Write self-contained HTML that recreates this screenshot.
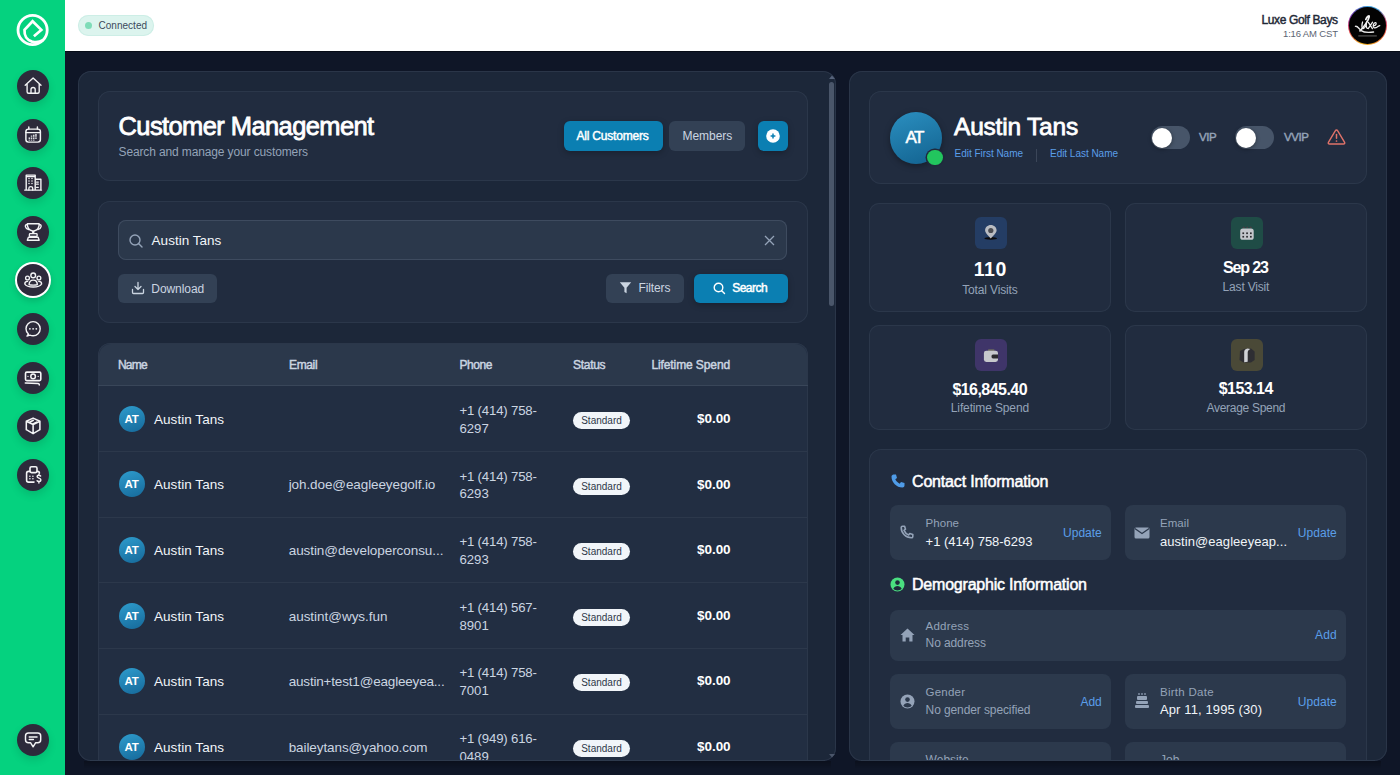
<!DOCTYPE html>
<html><head><meta charset="utf-8"><style>
*{margin:0;padding:0;box-sizing:border-box}
html,body{width:1400px;height:775px;overflow:hidden;background:#0f1627;font-family:"Liberation Sans",sans-serif;}
.b{position:absolute}
.t{position:absolute;line-height:1;white-space:nowrap}
.c{text-align:center}
.av{border-radius:50%;background:linear-gradient(160deg,#2e9ccd,#16699a);color:#fff;font-size:11.5px;font-weight:700;line-height:26px;text-align:center;letter-spacing:-0.3px}
.badge{width:57px;height:17px;border-radius:9px;background:#f1f5f9;color:#2d3748;font-size:10px;line-height:17px;text-align:center}
</style></head><body>
<domain style="display:none">Computer-Use</domain>

<div class="b" style="left:65px;top:0px;width:1335px;height:51px;background:#ffffff;border-radius:0px;"></div>
<div class="b" style="left:65px;top:51px;width:1335px;height:1px;background:#060b16;border-radius:0px;"></div>
<div class="b" style="left:78px;top:15px;width:76px;height:21px;border-radius:11px;background:#dcf4ee;box-shadow:inset 0 0 0 1px #cdeee6"></div>
<div class="b" style="left:85px;top:22px;width:7px;height:7px;border-radius:50%;background:#7fdcb8"></div>
<div class="b" style="left:1348px;top:6.3px;width:39px;height:39px;border-radius:50%;background:conic-gradient(from 0deg,#3a9ad8,#3a9ad8 30deg,#e04a70 80deg,#e05a3a 120deg,#f0a020 170deg,#f0b020 200deg,#e04060 260deg,#7a3ab0 300deg,#3a9ad8);"></div>
<div class="b" style="left:1349.1px;top:7.4px;width:36.8px;height:36.8px;border-radius:50%;background:#030303;"></div>
<svg class="b" style="left:1345px;top:4px" width="45" height="44" viewBox="0 0 45 44">
<path d="M20.8 15.5 C21.8 12.5 24.6 10.6 24.2 12.8 C23.6 16 19.5 22.5 15 26.8" stroke="#f2f2f2" stroke-width="1.7" fill="none" stroke-linecap="round"/>
<path d="M10.4 22.3 C12.5 21.6 14 25 16.2 26.6 C19 28.6 24 28.6 28.6 28" stroke="#e8e8e8" stroke-width="1.3" fill="none" stroke-linecap="round"/>
<path d="M17.6 18 C16.8 20.5 16.4 24.5 18.3 24.5 C19.8 24.5 21 21.5 21.6 18 C21.1 20.5 21 24.5 22.6 24.3 M23.4 18.4 L27.4 24.6 M27.6 18.2 L23.2 24.6 M28.3 21.8 C30 21.8 31.6 20.5 31.1 19.1 C30.6 18.1 28.4 18.8 28.2 21.6 C28 23.8 29.8 24.8 32.2 23 C33.2 22.2 34 21.8 34.8 21.6" stroke="#f2f2f2" stroke-width="1.25" fill="none" stroke-linecap="round" stroke-linejoin="round"/>
<rect x="13.3" y="31.2" width="18.5" height="1.4" fill="#4a4a4a"/>
</svg>
<div class="b" style="left:0px;top:0px;width:65px;height:775px;background:#05d27f;border-radius:0px;"></div>
<svg class="b" style="left:15px;top:13px" width="35" height="35" viewBox="0 0 35 35">
<circle cx="17.6" cy="17" r="14.6" stroke="#fff" stroke-width="2.8" fill="none"/>
<path d="M18.9 23.3 L26.3 16.9 L17.6 8.3 L9.5 16.9 C9.2 22.5 12 27 17 28.6 C20.5 29.6 24.5 29.2 27.9 27.3" stroke="#fff" stroke-width="2.7" fill="none" stroke-linejoin="miter" stroke-miterlimit="6"/>
</svg>
<div class="b" style="left:16.5px;top:70px;width:32px;height:32px;border-radius:50%;background:#2d2a3b;box-shadow:0 4px 8px rgba(0,0,0,.12)"></div>
<svg class="b" style="left:22.5px;top:76px" width="20" height="20" viewBox="0 0 20 20"><path d="M2.2 9.3 L10.1 1.9 L18 9.3 M4.1 7.6 V15.7 C4.1 16.6 4.7 17.2 5.6 17.2 H14.7 C15.6 17.2 16.2 16.6 16.2 15.7 V7.6 M8 17.2 V13.5 C8 12.3 9 11.5 10.1 11.5 C11.2 11.5 12.2 12.3 12.2 13.5 V17.2" stroke="#f4f4f6" fill="none" stroke-linecap="round" stroke-linejoin="round" stroke-width="1.35"/></svg>
<div class="b" style="left:16.5px;top:118.6px;width:32px;height:32px;border-radius:50%;background:#2d2a3b;box-shadow:0 4px 8px rgba(0,0,0,.12)"></div>
<svg class="b" style="left:22.5px;top:124.6px" width="20" height="20" viewBox="0 0 20 20"><rect x="2.9" y="4.1" width="14.5" height="13" rx="2.5" stroke="#f4f4f6" fill="none" stroke-linecap="round" stroke-linejoin="round" stroke-width="1.45"/><path d="M2.9 7.6 H17.4 M5.8 1.9 V4.1 M14.4 1.9 V4.1" stroke="#f4f4f6" fill="none" stroke-linecap="round" stroke-linejoin="round" stroke-width="1.45"/><g fill="#d9d9de"><rect x="5.6" y="12.4" width="1.5" height="1.6"/><rect x="7.8" y="12.4" width="1.5" height="1.6"/><rect x="10" y="12.4" width="1.5" height="1.6"/><rect x="12.2" y="12.4" width="1.5" height="1.6"/><rect x="7.8" y="10.5" width="1.5" height="1.3"/><rect x="10" y="9.7" width="1.5" height="2.1"/><rect x="12.2" y="9" width="1.5" height="2.8"/><rect x="5.6" y="14.6" width="1.5" height="1"/><rect x="7.8" y="14.6" width="1.5" height="1"/><rect x="10" y="14.6" width="1.5" height="1"/></g></svg>
<div class="b" style="left:16.5px;top:167.2px;width:32px;height:32px;border-radius:50%;background:#2d2a3b;box-shadow:0 4px 8px rgba(0,0,0,.12)"></div>
<svg class="b" style="left:22.5px;top:173.2px" width="20" height="20" viewBox="0 0 20 20"><path d="M1.7 17.1 H18.5 M3.2 17.1 V2.1 H12.2 V17.1 M3.2 3.6 H12.2 M12.2 6.3 H17.9 V17.1" stroke="#f4f4f6" fill="none" stroke-linecap="round" stroke-linejoin="round" stroke-width="1.4"/><g fill="#f4f4f6"><circle cx="6" cy="5.4" r="0.75"/><circle cx="9" cy="5.4" r="0.75"/><circle cx="6" cy="8" r="0.75"/><circle cx="9" cy="8" r="0.75"/><circle cx="6" cy="10.6" r="0.75"/><circle cx="9" cy="10.6" r="0.75"/></g><path d="M5.9 17.1 V15.1 C5.9 14.1 6.8 13.6 7.8 13.6 C8.8 13.6 9.7 14.1 9.7 15.1 V17.1 M13.6 9.1 H15.3 M13.6 11.2 H15.3 M13.6 14.3 H15.3" stroke="#f4f4f6" fill="none" stroke-linecap="round" stroke-linejoin="round" stroke-width="1.3"/></svg>
<div class="b" style="left:16.5px;top:215.7px;width:32px;height:32px;border-radius:50%;background:#2d2a3b;box-shadow:0 4px 8px rgba(0,0,0,.12)"></div>
<svg class="b" style="left:22.5px;top:221.7px" width="20" height="20" viewBox="0 0 20 20"><path d="M4.3 1.7 H16.2 C16.2 5.8 13.8 8.3 10.9 9 H9.6 C6.7 8.3 4.3 5.8 4.3 1.7 Z M4.5 2.5 C2.7 2.5 2.2 3.3 2.4 4.6 C2.7 6.1 3.7 7.1 5.6 7.6 M16 2.5 C17.8 2.5 18.3 3.3 18.1 4.6 C17.8 6.1 16.8 7.1 14.9 7.6 M9.6 9 L9.9 11.3 M10.9 9 L10.6 11.3" stroke="#f4f4f6" fill="none" stroke-linecap="round" stroke-linejoin="round" stroke-width="1.35"/><rect x="6.4" y="11.6" width="7.7" height="2.9" rx="0.8" stroke="#f4f4f6" fill="none" stroke-linecap="round" stroke-linejoin="round" stroke-width="1.35"/><path d="M4.3 18.2 L5.4 15.2 H15.1 L16.2 18.2 Z" stroke="#f4f4f6" fill="none" stroke-linecap="round" stroke-linejoin="round" stroke-width="1.35"/></svg>
<div class="b" style="left:14.5px;top:262.3px;width:36px;height:36px;border-radius:50%;background:#fff;box-shadow:0 3px 6px rgba(0,0,0,.15)"></div>
<div class="b" style="left:16.5px;top:264.3px;width:32px;height:32px;border-radius:50%;background:#2d2a3b"></div>
<svg class="b" style="left:22.5px;top:270.3px" width="20" height="20" viewBox="0 0 20 20"><circle cx="10.2" cy="5.4" r="2.35" stroke="#f4f4f6" fill="none" stroke-linecap="round" stroke-linejoin="round" stroke-width="1.4"/><circle cx="4.5" cy="8" r="1.9" stroke="#f4f4f6" fill="none" stroke-linecap="round" stroke-linejoin="round" stroke-width="1.35"/><circle cx="15.9" cy="8" r="1.9" stroke="#f4f4f6" fill="none" stroke-linecap="round" stroke-linejoin="round" stroke-width="1.35"/><path d="M6.1 14.6 C6.1 11.7 7.9 10.1 10.2 10.1 C12.5 10.1 14.3 11.7 14.3 14.6 C12.8 15.3 7.6 15.3 6.1 14.6 Z M1.8 14 C1.8 12.4 2.8 11.4 4.6 11.4 M18.6 14 C18.6 12.4 17.6 11.4 15.8 11.4 M1.8 14 C3 16 6.5 17 10.2 17 C13.9 17 17.4 16 18.6 14" stroke="#f4f4f6" fill="none" stroke-linecap="round" stroke-linejoin="round" stroke-width="1.4"/></svg>
<div class="b" style="left:16.5px;top:312.9px;width:32px;height:32px;border-radius:50%;background:#2d2a3b;box-shadow:0 4px 8px rgba(0,0,0,.12)"></div>
<svg class="b" style="left:22.5px;top:318.9px" width="20" height="20" viewBox="0 0 20 20"><path d="M5.4 15 C3.9 13.7 3 11.8 3 9.7 C3 5.8 6.2 2.6 10.1 2.6 C14 2.6 17.2 5.8 17.2 9.7 C17.2 13.6 14 16.8 10.1 16.8 C8.9 16.8 7.9 16.6 6.9 16.2 L4 17.1 Z" stroke="#f4f4f6" fill="none" stroke-linecap="round" stroke-linejoin="round" stroke-width="1.4"/><g fill="#f4f4f6"><circle cx="6.9" cy="9.8" r="0.9"/><circle cx="10.1" cy="9.8" r="0.9"/><circle cx="13.3" cy="9.8" r="0.9"/></g></svg>
<div class="b" style="left:16.5px;top:361.5px;width:32px;height:32px;border-radius:50%;background:#2d2a3b;box-shadow:0 4px 8px rgba(0,0,0,.12)"></div>
<svg class="b" style="left:22.5px;top:367.5px" width="20" height="20" viewBox="0 0 20 20"><rect x="2.5" y="4.1" width="15.3" height="8.5" rx="1.3" stroke="#f4f4f6" fill="none" stroke-linecap="round" stroke-linejoin="round" stroke-width="1.6"/><circle cx="10.1" cy="8.4" r="2.3" stroke="#f4f4f6" fill="none" stroke-linecap="round" stroke-linejoin="round" stroke-width="1.5"/><g fill="#e6e6ea"><circle cx="5" cy="8.4" r="0.65"/><circle cx="15.2" cy="8.4" r="0.65"/></g><path d="M2.3 15 C6 15 12 15.2 15 15.5 C16 15.6 16.5 16 16.2 16.9" stroke="#f4f4f6" fill="none" stroke-linecap="round" stroke-linejoin="round" stroke-width="1.5"/></svg>
<div class="b" style="left:16.5px;top:410.1px;width:32px;height:32px;border-radius:50%;background:#2d2a3b;box-shadow:0 4px 8px rgba(0,0,0,.12)"></div>
<svg class="b" style="left:22.5px;top:416.1px" width="20" height="20" viewBox="0 0 20 20"><path d="M10.1 2.1 L16.9 5.3 V13.7 L10.1 17.6 L3.3 13.7 V5.3 Z M3.3 5.3 L10.1 8.5 L16.9 5.3 M10.1 8.5 V17.6 M6.2 6.5 L10.3 4.3 M9.9 8 L13.7 6.1" stroke="#f4f4f6" fill="none" stroke-linecap="round" stroke-linejoin="round" stroke-width="1.55"/></svg>
<div class="b" style="left:16.5px;top:458.7px;width:32px;height:32px;border-radius:50%;background:#2d2a3b;box-shadow:0 4px 8px rgba(0,0,0,.12)"></div>
<svg class="b" style="left:22.5px;top:464.7px" width="20" height="20" viewBox="0 0 20 20"><rect x="7" y="1.7" width="7" height="5.9" rx="1.5" stroke="#f4f4f6" fill="none" stroke-linecap="round" stroke-linejoin="round" stroke-width="1.6"/><path d="M7 6.4 H5.6 C4.4 6.4 3.6 7.2 3.6 8.4 V15.2 C3.6 16.4 4.4 17.1 5.6 17.1 H11 M14 6.4 H14.6 C15.6 6.4 16.4 7.1 16.4 8.2" stroke="#f4f4f6" fill="none" stroke-linecap="round" stroke-linejoin="round" stroke-width="1.6"/><g fill="#f4f4f6"><circle cx="6.9" cy="11.3" r="0.8"/><circle cx="9.9" cy="11.3" r="0.8"/><circle cx="6.9" cy="13.8" r="0.8"/><circle cx="9.9" cy="13.8" r="0.8"/></g><path d="M17.6 10.9 C17.1 10.4 16.5 10.2 15.7 10.2 C14.7 10.2 14.1 10.8 14.1 11.6 C14.1 13.4 17.9 12.9 17.9 15 C17.9 15.9 17.1 16.5 16 16.5 C15.1 16.5 14.5 16.2 14.1 15.8 M15.9 9.3 V10.2 M15.9 16.5 V17.9" stroke="#f4f4f6" fill="none" stroke-linecap="round" stroke-linejoin="round" stroke-width="1.45"/></svg>
<div class="b" style="left:16.5px;top:724px;width:32px;height:32px;border-radius:50%;background:#2d2a3b;box-shadow:0 4px 8px rgba(0,0,0,.12)"></div>
<svg class="b" style="left:22.5px;top:730px" width="20" height="20" viewBox="0 0 20 20"><path d="M5.5 3 H14.7 C16.4 3 17.7 4.3 17.7 6 V9.7 C17.7 11.4 16.4 12.7 14.7 12.7 H12.7 L10.1 16.8 L7.5 12.7 H5.5 C3.8 12.7 2.5 11.4 2.5 9.7 V6 C2.5 4.3 3.8 3 5.5 3 Z" stroke="#f4f4f6" fill="none" stroke-linecap="round" stroke-linejoin="round" stroke-width="1.45"/><path d="M6.3 7 H14 M6.3 9.6 H10.4" stroke="#f4f4f6" fill="none" stroke-linecap="round" stroke-linejoin="round" stroke-width="1.5"/></svg>
<div class="b" style="left:78px;top:71px;width:758px;height:690px;border-radius:13px;background:#1c2739;box-shadow:inset 0 0 0 1px #2a3548;overflow:hidden"></div>
<div class="b" style="left:829px;top:82px;width:5px;height:224px;border-radius:3px;background:#4a566a"></div>
<svg class="b" style="left:828.5px;top:75px" width="6" height="4"><path d="M0 4 L3 0.5 L6 4Z" fill="#56627a"/></svg>
<svg class="b" style="left:828.5px;top:754px" width="6" height="4"><path d="M0 0 L3 3.5 L6 0Z" fill="#4b566a"/></svg>
<div class="b" style="left:98px;top:91px;width:710px;height:90px;border-radius:12px;background:#212c3f;box-shadow:inset 0 0 0 1px #2b374a"></div>
<div class="b" style="left:564px;top:121px;width:99px;height:30px;border-radius:6px;background:#0b7fb2;box-shadow:0 2px 6px rgba(0,0,0,.25)"></div>
<div class="b" style="left:669px;top:121px;width:76px;height:30px;border-radius:6px;background:#334155"></div>
<div class="b" style="left:758px;top:121px;width:30px;height:30px;border-radius:6px;background:#0b7fb2;box-shadow:0 2px 6px rgba(0,0,0,.25)"></div>
<svg class="b" style="left:766px;top:129px" width="14" height="14" viewBox="0 0 14 14"><circle cx="7" cy="7" r="6.8" fill="#fff"/><path d="M7 4.6 V9.4 M4.6 7 H9.4" stroke="#0b7fb2" stroke-width="1.5"/></svg>
<div class="b" style="left:98px;top:201px;width:710px;height:122px;border-radius:12px;background:#212c3f;box-shadow:inset 0 0 0 1px #2b374a"></div>
<div class="b" style="left:118px;top:220px;width:669px;height:40px;border-radius:8px;background:#2b384b;box-shadow:inset 0 0 0 1px #3e4b5f"></div>
<svg class="b" style="left:128px;top:233px" width="16" height="16" viewBox="0 0 16 16"><circle cx="7" cy="7" r="5" stroke="#94a3b8" stroke-width="1.4" fill="none"/><path d="M10.8 10.8 L14 14" stroke="#94a3b8" stroke-width="1.4" stroke-linecap="round"/></svg>
<svg class="b" style="left:764px;top:235px" width="11" height="11" viewBox="0 0 11 11"><path d="M1 1 L10 10 M10 1 L1 10" stroke="#94a3b8" stroke-width="1.3"/></svg>
<div class="b" style="left:118px;top:274px;width:99px;height:29px;border-radius:6px;background:#334155"></div>
<svg class="b" style="left:131px;top:281px" width="14" height="14" viewBox="0 0 14 14"><path d="M7 1.5 V8.5 M4 5.5 L7 8.5 L10 5.5 M1.5 8.5 V11.5 C1.5 12 2 12.5 2.5 12.5 H11.5 C12 12.5 12.5 12 12.5 11.5 V8.5" stroke="#cbd5e1" stroke-width="1.3" fill="none" stroke-linecap="round" stroke-linejoin="round"/></svg>
<div class="b" style="left:606px;top:274px;width:78px;height:29px;border-radius:6px;background:#334155"></div>
<svg class="b" style="left:619px;top:281px" width="13" height="13" viewBox="0 0 13 13"><path d="M0.8 1.3 H12.2 L7.6 6.8 V12.3 L5.4 11 V6.8 Z" fill="#cbd5e1"/></svg>
<div class="b" style="left:694px;top:274px;width:94px;height:29px;border-radius:6px;background:#0b7fb2;box-shadow:0 2px 6px rgba(0,0,0,.25)"></div>
<svg class="b" style="left:712px;top:281px" width="14" height="14" viewBox="0 0 14 14"><circle cx="6.5" cy="6.5" r="4.3" stroke="#fff" stroke-width="1.4" fill="none"/><path d="M9.7 9.7 L12.5 12.5" stroke="#fff" stroke-width="1.4" stroke-linecap="round"/></svg>
<div class="b" style="left:98px;top:343px;width:710px;height:418px;overflow:hidden;">
<div style="position:absolute;left:0;top:0;width:710px;height:500px;border-radius:12px;background:#222e42;box-shadow:inset 0 0 0 1px #2b374a;"></div>
<div style="position:absolute;left:1px;top:1px;width:708px;height:42px;border-radius:12px 12px 0 0;background:#2b384b;"></div>
<div style="position:absolute;left:0;top:42px;width:710px;height:1px;background:#394659;"></div>
</div>
<div class="b av" style="left:118.5px;top:405.8px;width:26px;height:26px;">AT</div>
<div class="b badge" style="left:573px;top:411.9px;">Standard</div>
<div class="b" style="left:99px;top:451.1px;width:708px;height:1px;background:#2c384b"></div>
<div class="b av" style="left:118.5px;top:471.4px;width:26px;height:26px;">AT</div>
<div class="b badge" style="left:573px;top:477.5px;">Standard</div>
<div class="b" style="left:99px;top:516.7px;width:708px;height:1px;background:#2c384b"></div>
<div class="b av" style="left:118.5px;top:537.0px;width:26px;height:26px;">AT</div>
<div class="b badge" style="left:573px;top:543.1px;">Standard</div>
<div class="b" style="left:99px;top:582.3px;width:708px;height:1px;background:#2c384b"></div>
<div class="b av" style="left:118.5px;top:602.6px;width:26px;height:26px;">AT</div>
<div class="b badge" style="left:573px;top:608.7px;">Standard</div>
<div class="b" style="left:99px;top:647.9px;width:708px;height:1px;background:#2c384b"></div>
<div class="b av" style="left:118.5px;top:668.2px;width:26px;height:26px;">AT</div>
<div class="b badge" style="left:573px;top:674.3px;">Standard</div>
<div class="b" style="left:99px;top:713.5px;width:708px;height:1px;background:#2c384b"></div>
<div class="b av" style="left:118.5px;top:733.8px;width:26px;height:26px;">AT</div>
<div class="b badge" style="left:573px;top:739.9px;">Standard</div>
<div class="b" style="left:65px;top:761px;width:1335px;height:14px;background:#0f1627;z-index:5"></div>
<div class="b" style="left:84px;top:761px;width:747px;height:8px;background:linear-gradient(rgba(0,0,0,.28),rgba(0,0,0,0));z-index:6"></div>
<div class="b" style="left:90px;top:760px;width:735px;height:1px;background:#2e3a4d;z-index:6"></div>
<div class="b" style="left:849px;top:71px;width:538px;height:690px;border-radius:13px;background:#1c2739;box-shadow:inset 0 0 0 1px #2a3548"></div>
<div class="b" style="left:869px;top:91px;width:498px;height:93px;border-radius:12px;background:#212c3f;box-shadow:inset 0 0 0 1px #2b374a"></div>
<div class="b" style="left:889.5px;top:112px;width:52px;height:52px;border-radius:50%;background:linear-gradient(160deg,#2b8fc0,#12628f);box-shadow:0 2px 6px rgba(0,0,0,.35);"></div>
<div class="b" style="left:927px;top:149.5px;width:15.5px;height:15.5px;border-radius:50%;background:#22c55e;box-shadow:0 0 0 1.5px #1f2a3c"></div>
<div class="b" style="left:1036px;top:149px;width:1px;height:13px;background:#3b4659"></div>
<div class="b" style="left:1151px;top:126px;width:39px;height:23px;border-radius:12px;background:#475569"></div>
<div class="b" style="left:1152px;top:127.5px;width:20px;height:20px;border-radius:50%;background:#fff;box-shadow:0 1px 4px rgba(0,0,0,.4)"></div>
<div class="b" style="left:1234.5px;top:126px;width:39px;height:23px;border-radius:12px;background:#475569"></div>
<div class="b" style="left:1235.5px;top:127.5px;width:20px;height:20px;border-radius:50%;background:#fff;box-shadow:0 1px 4px rgba(0,0,0,.4)"></div>
<svg class="b" style="left:1326px;top:127px" width="21" height="19" viewBox="0 0 21 19"><path d="M9.4 3.6 C9.9 2.7 11.1 2.7 11.6 3.6 L18.6 15.4 C19.1 16.3 18.5 17 17.5 17 H3.5 C2.5 17 1.9 16.3 2.4 15.4 Z" stroke="#e0736a" stroke-width="1.4" fill="none" stroke-linejoin="round"/><path d="M10.5 7.6 V11.3" stroke="#e0736a" stroke-width="1.5" stroke-linecap="round"/><circle cx="10.5" cy="14" r="0.85" fill="#e0736a"/></svg>
<div class="b" style="left:869px;top:203px;width:242px;height:109px;border-radius:10px;background:#212c3f;box-shadow:inset 0 0 0 1px #2b374a"></div>
<svg class="b" style="left:975px;top:217px" width="32" height="32" viewBox="0 0 32 32"><rect width="32" height="32" rx="6" fill="#243d64"/><ellipse cx="15.7" cy="21.4" rx="6.3" ry="1.3" fill="#0c0c0e"/><path d="M15.8 21.6 C12.6 18 10.1 15.8 10.1 13.3 C10.1 10.2 12.6 7.9 15.8 7.9 C19 7.9 21.6 10.2 21.6 13.3 C21.6 15.8 19 18 15.8 21.6Z" fill="#b9bcc2"/><circle cx="15.8" cy="13.5" r="2.6" fill="#4a4c52"/></svg>
<div class="b" style="left:1125px;top:203px;width:242px;height:109px;border-radius:10px;background:#212c3f;box-shadow:inset 0 0 0 1px #2b374a"></div>
<svg class="b" style="left:1231px;top:217px" width="32" height="32" viewBox="0 0 32 32"><rect width="32" height="32" rx="6" fill="#1f4c46"/><g fill="#4a3f45"><path d="M11.5 11 L12.8 9.2 L14 11Z"/><path d="M15 11 L16.2 9.2 L17.4 11Z"/><path d="M18.5 11 L19.7 9.2 L21 11Z"/></g><rect x="9.2" y="11.5" width="13.5" height="11.3" rx="2.6" fill="#c4c6cb"/><g fill="#2a2a2e"><rect x="11.4" y="15.4" width="1.7" height="1.7"/><rect x="15.2" y="15.4" width="1.7" height="1.7"/><rect x="19" y="15.4" width="1.7" height="1.7"/><rect x="11.4" y="18.9" width="1.7" height="1.7"/><rect x="15.2" y="18.9" width="1.7" height="1.7"/><rect x="19" y="18.9" width="1.7" height="1.7"/></g></svg>
<div class="b" style="left:869px;top:325px;width:242px;height:105px;border-radius:10px;background:#212c3f;box-shadow:inset 0 0 0 1px #2b374a"></div>
<svg class="b" style="left:975px;top:339px" width="32" height="32" viewBox="0 0 32 32"><rect width="32" height="32" rx="6" fill="#3f3569"/><rect x="13" y="10.2" width="6.5" height="2" rx="0.8" fill="#6b6a60"/><rect x="8.9" y="11.7" width="14.1" height="11.3" rx="2.4" fill="#c6c8cc"/><path d="M18.1 15.4 H23 V19.4 H18.1 C17 19.4 16.5 18.5 16.5 17.4 C16.5 16.3 17 15.4 18.1 15.4Z" fill="#2b2b2e"/></svg>
<div class="b" style="left:1125px;top:325px;width:242px;height:105px;border-radius:10px;background:#212c3f;box-shadow:inset 0 0 0 1px #2b374a"></div>
<svg class="b" style="left:1231px;top:339px" width="32" height="32" viewBox="0 0 32 32"><rect width="32" height="32" rx="6" fill="#4a4937"/><path d="M9 12 L13 10 L20 9.5 L23.6 12.5 V21 L20 23.5 L12.5 23.5 L8.5 21Z" fill="#2e2e33"/><path d="M13.2 13 C13.2 11.3 14.3 10.3 16.5 9.6 L19.3 9.9 C17.5 10.7 16.7 11.8 16.7 13.5 V22.8 L13.2 23.2Z" fill="#d0d2d6"/></svg>
<div class="b" style="left:869px;top:449px;width:498px;height:312px;overflow:hidden;"><div style="position:absolute;left:0;top:0;width:498px;height:400px;border-radius:12px;background:#212c3f;box-shadow:inset 0 0 0 1px #2b374a"></div></div>
<svg class="b" style="left:890px;top:473px" width="16" height="16" viewBox="0 0 16 16"><path d="M3.5 1.5 L6 1.5 L7 5 L5.3 6.3 C6.2 8.3 7.7 9.8 9.7 10.7 L11 9 L14.5 10 V12.5 C14.5 13.5 13.5 14.5 12.5 14.5 C6.5 14.5 1.5 9.5 1.5 3.5 C1.5 2.5 2.5 1.5 3.5 1.5Z" fill="#4f9ce8"/></svg>
<div class="b" style="left:890px;top:505px;width:221px;height:55px;border-radius:8px;background:#2c394c"></div>
<div class="b" style="left:1125px;top:505px;width:221px;height:55px;border-radius:8px;background:#2c394c"></div>
<svg class="b" style="left:899px;top:524px" width="16" height="16" viewBox="0 0 16 16"><path d="M3.6 2.2 L5.6 2.2 L6.5 5.2 L5 6.4 C5.9 8.5 7.5 10.1 9.6 11 L10.8 9.5 L13.8 10.4 V12.4 C13.8 13.2 13.2 13.8 12.4 13.8 C6.8 13.8 2.2 9.2 2.2 3.6 C2.2 2.8 2.8 2.2 3.6 2.2Z" stroke="#94a3b8" stroke-width="1.6" fill="none" stroke-linejoin="round"/></svg>
<svg class="b" style="left:1134px;top:527px" width="16" height="12" viewBox="0 0 16 12"><rect x="0.5" y="0.5" width="15" height="11" rx="1.5" fill="#94a3b8"/><path d="M0.8 1.5 L8 6.5 L15.2 1.5" stroke="#2c394c" stroke-width="1.3" fill="none"/></svg>
<svg class="b" style="left:890px;top:577px" width="15" height="15" viewBox="0 0 15 15"><circle cx="7.5" cy="7.5" r="7" fill="#4ade80"/><circle cx="7.5" cy="5.6" r="2.3" fill="#1e293b"/><path d="M3.3 11.8 C4.3 9.8 5.7 9 7.5 9 C9.3 9 10.7 9.8 11.7 11.8 C10.6 12.9 9.1 13.5 7.5 13.5 C5.9 13.5 4.4 12.9 3.3 11.8Z" fill="#1e293b"/></svg>
<div class="b" style="left:890px;top:610px;width:456px;height:51px;border-radius:8px;background:#2c394c"></div>
<svg class="b" style="left:900px;top:628px" width="15" height="14" viewBox="0 0 15 14"><path d="M7.5 0.5 L14.5 7 H12.5 V13.5 H9.3 V9.5 H5.7 V13.5 H2.5 V7 H0.5Z" fill="#94a3b8"/></svg>
<div class="b" style="left:890px;top:674px;width:221px;height:55px;border-radius:8px;background:#2c394c"></div>
<div class="b" style="left:1125px;top:674px;width:221px;height:55px;border-radius:8px;background:#2c394c"></div>
<svg class="b" style="left:900px;top:694px" width="15" height="15" viewBox="0 0 15 15"><circle cx="7.5" cy="7.5" r="7" fill="#94a3b8"/><circle cx="7.5" cy="5.6" r="2.3" fill="#2c394c"/><path d="M3.3 11.8 C4.3 9.8 5.7 9 7.5 9 C9.3 9 10.7 9.8 11.7 11.8 C10.6 12.9 9.1 13.5 7.5 13.5 C5.9 13.5 4.4 12.9 3.3 11.8Z" fill="#2c394c"/></svg>
<svg class="b" style="left:1134px;top:692px" width="16" height="17" viewBox="0 0 16 17"><path d="M5 1 V3 M8 1 V3 M11 1 V3" stroke="#94a3b8" stroke-width="1.2"/><rect x="3" y="4" width="10" height="4" rx="1" fill="#94a3b8"/><rect x="2" y="9" width="12" height="3" rx="1" fill="#94a3b8"/><rect x="1" y="13" width="14" height="3" rx="1" fill="#94a3b8"/></svg>
<div class="b" style="left:890px;top:742px;width:221px;height:30px;border-radius:8px;background:#2c394c"></div>
<div class="b" style="left:1125px;top:742px;width:221px;height:30px;border-radius:8px;background:#2c394c"></div>
<div class="b" style="left:849px;top:761px;width:551px;height:14px;background:#0f1627;z-index:5"></div>
<div class="b" style="left:855px;top:761px;width:526px;height:8px;background:linear-gradient(rgba(0,0,0,.28),rgba(0,0,0,0));z-index:6"></div>
<div class="b" style="left:861px;top:760px;width:514px;height:1px;background:#2e3a4d;z-index:6"></div>
<div class="t" style="left:98.5px;top:21.04px;font-size:10px;font-weight:400;color:#3b4a5c;letter-spacing:0.019px;">Connected</div>
<div class="t" style="right:62.37px;top:13.64px;font-size:12px;font-weight:400;color:#1f2937;letter-spacing:-0.373px;-webkit-text-stroke:0.45px #1f2937;">Luxe Golf Bays</div>
<div class="t" style="right:62.15px;top:28.96px;font-size:9.5px;font-weight:400;color:#5b6472;letter-spacing:-0.150px;">1:16 AM CST</div>
<div class="t" style="left:118.5px;top:114.11px;font-size:25.5px;font-weight:400;color:#ffffff;letter-spacing:-0.598px;-webkit-text-stroke:0.82px #ffffff;">Customer Management</div>
<div class="t" style="left:118.5px;top:146.44px;font-size:12px;font-weight:400;color:#94a3b8;letter-spacing:-0.127px;">Search and manage your customers</div>
<div class="t" style="left:576.4px;top:130.24px;font-size:12px;font-weight:400;color:#fff;letter-spacing:-0.188px;-webkit-text-stroke:0.45px #fff;">All Customers</div>
<div class="t" style="left:682.5px;top:130.24px;font-size:12px;font-weight:400;color:#cbd5e1;letter-spacing:-0.050px;">Members</div>
<div class="t" style="left:151.6px;top:234.07px;font-size:13.5px;font-weight:400;color:#f1f5f9;letter-spacing:0.015px;">Austin Tans</div>
<div class="t" style="left:151.3px;top:282.84px;font-size:12px;font-weight:400;color:#cbd5e1;letter-spacing:-0.064px;">Download</div>
<div class="t" style="left:638.5px;top:282.14px;font-size:12px;font-weight:400;color:#cbd5e1;letter-spacing:-0.125px;">Filters</div>
<div class="t" style="left:732.3px;top:282.14px;font-size:12px;font-weight:400;color:#fff;letter-spacing:-0.550px;-webkit-text-stroke:0.45px #fff;">Search</div>
<div class="t" style="left:118px;top:359.14px;font-size:12px;font-weight:400;color:#cbd5e1;letter-spacing:-0.817px;-webkit-text-stroke:0.45px #cbd5e1;">Name</div>
<div class="t" style="left:289px;top:359.14px;font-size:12px;font-weight:400;color:#cbd5e1;letter-spacing:-0.362px;-webkit-text-stroke:0.45px #cbd5e1;">Email</div>
<div class="t" style="left:459.4px;top:359.14px;font-size:12px;font-weight:400;color:#cbd5e1;letter-spacing:-0.387px;-webkit-text-stroke:0.45px #cbd5e1;">Phone</div>
<div class="t" style="left:573px;top:359.14px;font-size:12px;font-weight:400;color:#cbd5e1;letter-spacing:-0.290px;-webkit-text-stroke:0.45px #cbd5e1;">Status</div>
<div class="t" style="left:651.4px;top:359.14px;font-size:12px;font-weight:400;color:#cbd5e1;letter-spacing:-0.100px;-webkit-text-stroke:0.45px #cbd5e1;">Lifetime Spend</div>
<div class="t" style="left:154px;top:412.87px;font-size:13.5px;font-weight:400;color:#f1f5f9;letter-spacing:0.045px;">Austin Tans</div>
<div class="t" style="left:459.4px;top:404.03px;font-size:13.2px;font-weight:400;color:#cbd5e1;letter-spacing:-0.167px;">+1 (414) 758-</div>
<div class="t" style="left:459.4px;top:421.73px;font-size:13.2px;font-weight:400;color:#cbd5e1;letter-spacing:0.000px;">6297</div>
<div class="t" style="right:669.45px;top:411.97px;font-size:13.5px;font-weight:700;color:#fff;letter-spacing:-0.050px;">$0.00</div>
<div class="t" style="left:154px;top:478.47px;font-size:13.5px;font-weight:400;color:#f1f5f9;letter-spacing:0.045px;">Austin Tans</div>
<div class="t" style="left:288.7px;top:478.47px;font-size:13.5px;font-weight:400;color:#cbd5e1;letter-spacing:-0.098px;">joh.doe@eagleeyegolf.io</div>
<div class="t" style="left:459.4px;top:469.63px;font-size:13.2px;font-weight:400;color:#cbd5e1;letter-spacing:-0.167px;">+1 (414) 758-</div>
<div class="t" style="left:459.4px;top:487.33px;font-size:13.2px;font-weight:400;color:#cbd5e1;letter-spacing:0.000px;">6293</div>
<div class="t" style="right:669.45px;top:477.57px;font-size:13.5px;font-weight:700;color:#fff;letter-spacing:-0.050px;">$0.00</div>
<div class="t" style="left:154px;top:544.07px;font-size:13.5px;font-weight:400;color:#f1f5f9;letter-spacing:0.045px;">Austin Tans</div>
<div class="t" style="left:288.7px;top:544.07px;font-size:13.5px;font-weight:400;color:#cbd5e1;letter-spacing:-0.070px;">austin@developerconsu...</div>
<div class="t" style="left:459.4px;top:535.23px;font-size:13.2px;font-weight:400;color:#cbd5e1;letter-spacing:-0.167px;">+1 (414) 758-</div>
<div class="t" style="left:459.4px;top:552.93px;font-size:13.2px;font-weight:400;color:#cbd5e1;letter-spacing:0.000px;">6293</div>
<div class="t" style="right:669.45px;top:543.17px;font-size:13.5px;font-weight:700;color:#fff;letter-spacing:-0.050px;">$0.00</div>
<div class="t" style="left:154px;top:609.67px;font-size:13.5px;font-weight:400;color:#f1f5f9;letter-spacing:0.045px;">Austin Tans</div>
<div class="t" style="left:288.7px;top:609.67px;font-size:13.5px;font-weight:400;color:#cbd5e1;letter-spacing:-0.032px;">austint@wys.fun</div>
<div class="t" style="left:459.4px;top:600.83px;font-size:13.2px;font-weight:400;color:#cbd5e1;letter-spacing:-0.167px;">+1 (414) 567-</div>
<div class="t" style="left:459.4px;top:618.53px;font-size:13.2px;font-weight:400;color:#cbd5e1;letter-spacing:0.000px;">8901</div>
<div class="t" style="right:669.45px;top:608.77px;font-size:13.5px;font-weight:700;color:#fff;letter-spacing:-0.050px;">$0.00</div>
<div class="t" style="left:154px;top:675.27px;font-size:13.5px;font-weight:400;color:#f1f5f9;letter-spacing:0.045px;">Austin Tans</div>
<div class="t" style="left:288.7px;top:675.27px;font-size:13.5px;font-weight:400;color:#cbd5e1;letter-spacing:-0.185px;">austin+test1@eagleeyea...</div>
<div class="t" style="left:459.4px;top:666.43px;font-size:13.2px;font-weight:400;color:#cbd5e1;letter-spacing:-0.167px;">+1 (414) 758-</div>
<div class="t" style="left:459.4px;top:684.13px;font-size:13.2px;font-weight:400;color:#cbd5e1;letter-spacing:0.000px;">7001</div>
<div class="t" style="right:669.45px;top:674.37px;font-size:13.5px;font-weight:700;color:#fff;letter-spacing:-0.050px;">$0.00</div>
<div class="t" style="left:154px;top:740.87px;font-size:13.5px;font-weight:400;color:#f1f5f9;letter-spacing:0.045px;">Austin Tans</div>
<div class="t" style="left:288.7px;top:740.87px;font-size:13.5px;font-weight:400;color:#cbd5e1;letter-spacing:-0.087px;">baileytans@yahoo.com</div>
<div class="t" style="left:459.4px;top:732.03px;font-size:13.2px;font-weight:400;color:#cbd5e1;letter-spacing:-0.167px;">+1 (949) 616-</div>
<div class="t" style="left:459.4px;top:749.73px;font-size:13.2px;font-weight:400;color:#cbd5e1;letter-spacing:0.000px;">0489</div>
<div class="t" style="right:669.45px;top:739.97px;font-size:13.5px;font-weight:700;color:#fff;letter-spacing:-0.050px;">$0.00</div>
<div class="t" style="left:905.6px;top:129.21px;font-size:17px;font-weight:400;color:#fff;letter-spacing:-1.594px;-webkit-text-stroke:0.54px #fff;">AT</div>
<div class="t" style="left:954px;top:115.06px;font-size:24.5px;font-weight:400;color:#fff;letter-spacing:-0.198px;-webkit-text-stroke:0.78px #fff;">Austin Tans</div>
<div class="t" style="left:954.6px;top:148.94px;font-size:10px;font-weight:400;color:#5b9ee9;letter-spacing:-0.036px;">Edit First Name</div>
<div class="t" style="left:1050px;top:148.94px;font-size:10px;font-weight:400;color:#5b9ee9;letter-spacing:-0.027px;">Edit Last Name</div>
<div class="t" style="left:1199px;top:132.47px;font-size:11.5px;font-weight:400;color:#94a3b8;letter-spacing:-0.450px;-webkit-text-stroke:0.45px #94a3b8;">VIP</div>
<div class="t" style="left:1284px;top:132.47px;font-size:11.5px;font-weight:400;color:#94a3b8;letter-spacing:-0.450px;-webkit-text-stroke:0.45px #94a3b8;">VVIP</div>
<div class="t" style="left:790.31px;width:400px;text-align:center;top:260.19px;font-size:19.5px;font-weight:700;color:#fff;letter-spacing:0.625px;">110</div>
<div class="t" style="left:789.93px;width:400px;text-align:center;top:283.84px;font-size:12px;font-weight:400;color:#94a3b8;letter-spacing:-0.132px;">Total Visits</div>
<div class="t" style="left:1045.44px;width:400px;text-align:center;top:260.46px;font-size:16px;font-weight:700;color:#fff;letter-spacing:-1.120px;">Sep 23</div>
<div class="t" style="left:1045.91px;width:400px;text-align:center;top:280.64px;font-size:12px;font-weight:400;color:#94a3b8;letter-spacing:-0.183px;">Last Visit</div>
<div class="t" style="left:789.73px;width:400px;text-align:center;top:381.66px;font-size:16px;font-weight:700;color:#fff;letter-spacing:-0.544px;">$16,845.40</div>
<div class="t" style="left:789.93px;width:400px;text-align:center;top:402.34px;font-size:12px;font-weight:400;color:#94a3b8;letter-spacing:-0.135px;">Lifetime Spend</div>
<div class="t" style="left:1045.74px;width:400px;text-align:center;top:381.46px;font-size:16px;font-weight:700;color:#fff;letter-spacing:-0.525px;">$153.14</div>
<div class="t" style="left:1045.85px;width:400px;text-align:center;top:402.34px;font-size:12px;font-weight:400;color:#94a3b8;letter-spacing:-0.292px;">Average Spend</div>
<div class="t" style="left:912px;top:473.86px;font-size:16px;font-weight:400;color:#fff;letter-spacing:-0.176px;-webkit-text-stroke:0.51px #fff;">Contact Information</div>
<div class="t" style="left:925.6px;top:518.27px;font-size:11.5px;font-weight:400;color:#94a3b8;letter-spacing:0.037px;">Phone</div>
<div class="t" style="left:925.6px;top:534.80px;font-size:13px;font-weight:400;color:#f1f5f9;letter-spacing:-0.034px;">+1 (414) 758-6293</div>
<div class="t" style="right:298.18px;top:527.44px;font-size:12px;font-weight:400;color:#5b9ee9;letter-spacing:0.020px;">Update</div>
<div class="t" style="left:1160px;top:518.27px;font-size:11.5px;font-weight:400;color:#94a3b8;letter-spacing:0.062px;">Email</div>
<div class="t" style="left:1160px;top:534.80px;font-size:13px;font-weight:400;color:#f1f5f9;letter-spacing:0.055px;">austin@eagleeyeap...</div>
<div class="t" style="right:63.24px;top:527.44px;font-size:12px;font-weight:400;color:#5b9ee9;letter-spacing:0.060px;">Update</div>
<div class="t" style="left:912px;top:577.46px;font-size:16px;font-weight:400;color:#fff;letter-spacing:-0.212px;-webkit-text-stroke:0.51px #fff;">Demographic Information</div>
<div class="t" style="left:925.6px;top:621.17px;font-size:11.5px;font-weight:400;color:#94a3b8;letter-spacing:0.200px;">Address</div>
<div class="t" style="left:925.6px;top:636.84px;font-size:12px;font-weight:400;color:#94a3b8;letter-spacing:-0.106px;">No address</div>
<div class="t" style="right:63.12px;top:629.14px;font-size:12px;font-weight:400;color:#5b9ee9;letter-spacing:0.175px;">Add</div>
<div class="t" style="left:925.6px;top:687.47px;font-size:11.5px;font-weight:400;color:#94a3b8;letter-spacing:0.210px;">Gender</div>
<div class="t" style="left:925.6px;top:703.64px;font-size:12px;font-weight:400;color:#94a3b8;letter-spacing:-0.103px;">No gender specified</div>
<div class="t" style="right:298.28px;top:696.34px;font-size:12px;font-weight:400;color:#5b9ee9;letter-spacing:-0.075px;">Add</div>
<div class="t" style="left:1160px;top:686.67px;font-size:11.5px;font-weight:400;color:#94a3b8;letter-spacing:0.272px;">Birth Date</div>
<div class="t" style="left:1160px;top:702.80px;font-size:13px;font-weight:400;color:#f1f5f9;letter-spacing:0.112px;">Apr 11, 1995 (30)</div>
<div class="t" style="right:63.24px;top:696.34px;font-size:12px;font-weight:400;color:#5b9ee9;letter-spacing:0.060px;">Update</div>
<div class="t" style="left:925.6px;top:753.84px;font-size:12px;font-weight:400;color:#94a3b8;letter-spacing:0.000px;">Website</div>
<div class="t" style="left:1160px;top:753.84px;font-size:12px;font-weight:400;color:#94a3b8;letter-spacing:0.000px;">Job</div>
</body></html>
